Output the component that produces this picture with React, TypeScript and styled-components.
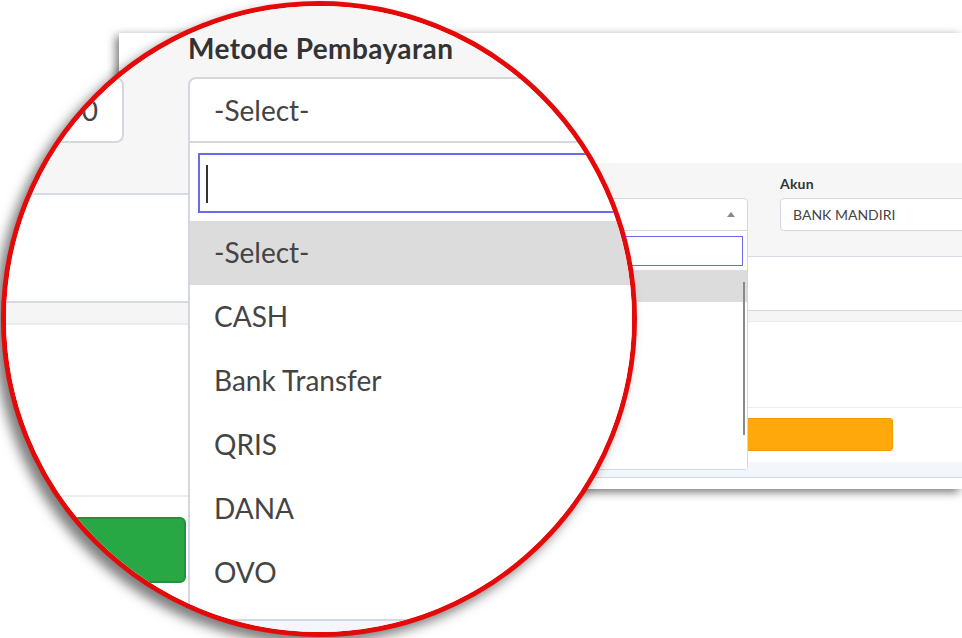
import React from 'react';
import styled, { createGlobalStyle } from 'styled-components';

const GlobalStyle = createGlobalStyle`
  html, body { margin: 0; padding: 0; background: #ffffff; }
  body { width: 962px; height: 638px; overflow: hidden; }
  * { box-sizing: border-box; }
`;

const FONT = `Lato, "Open Sans", "Noto Sans", sans-serif`;

const Page = styled.div`
  position: relative;
  width: 962px;
  height: 638px;
  padding: 33px 0 0 119px;
  background: #ffffff;
  font-family: ${FONT};
`;

const Shot = styled.div`
  position: relative;
  z-index: 0;
  width: 843px;
  height: 456px;
  box-shadow: -3px 3px 9px rgba(0, 0, 0, 0.55);
`;

const Screen = styled.div`
  width: 843px;
  height: 456px;
  overflow: hidden;
  background: #ffffff;
  display: flex;
  flex-direction: column;
  font-family: ${FONT};
  color: #444;
`;

const TopArea = styled.div`
  height: 130px;
  flex: none;
`;

const FilterBand = styled.div`
  position: relative;
  z-index: 3;
  flex: none;
  height: 94px;
  background: #f6f6f6;
  border-bottom: 1px solid #d8dbe3;
  padding: 12px 0 0 0;
  display: grid;
  grid-template-columns: 103px 494px 494px;
  column-gap: 32px;
  align-items: start;
`;

const Field = styled.div`
  display: flex;
  flex-direction: column;
  gap: 6px;
`;

const Label = styled.div`
  height: 17px;
  font-size: 14px;
  font-weight: 700;
  letter-spacing: 0.2px;
  line-height: 17px;
  color: #333;
  white-space: nowrap;
`;

const SelectWrap = styled.div`
  position: relative;
`;

const InputBox = styled.div<{ $align?: string; $open?: boolean }>`
  height: 33px;
  background: #fff;
  border: 1px solid #d3d7df;
  border-radius: ${(p) => (p.$open ? '4px 4px 0 0' : '4px')};
  padding: 0 12px;
  display: flex;
  align-items: center;
  justify-content: ${(p) => p.$align || 'flex-start'};
  font-size: 14px;
  color: #444;
  white-space: nowrap;
`;

const SelectValue = styled.span`
  flex: 1;
`;

const Arrow = styled.span`
  width: 0;
  height: 0;
  border-left: 4px solid transparent;
  border-right: 4px solid transparent;
  border-bottom: 5px solid #888;
`;

const Dropdown = styled.div`
  position: absolute;
  left: 0;
  right: 0;
  top: 100%;
  z-index: 10;
  background: #fff;
  border: 1px solid #d3d7df;
  border-top: none;
  border-radius: 0 0 4px 4px;
  padding-top: 5px;
`;

const SearchBox = styled.div`
  margin: 0 4px 4px 4px;
  height: 30px;
  border: 1px solid #6a6aec;
  display: flex;
  align-items: center;
  padding-left: 3px;
`;

const Caret = styled.span`
  width: 1px;
  height: 19px;
  background: #333;
`;

const OptionList = styled.div`
  position: relative;
  height: 199px;
  overflow: hidden;
`;

const Option = styled.div<{ $active?: boolean }>`
  height: 32px;
  line-height: 32px;
  padding: 0 12px;
  font-size: 14px;
  color: #444;
  background: ${(p) => (p.$active ? '#dcdcdc' : '#fff')};
  white-space: nowrap;
`;

const ScrollThumb = styled.div`
  position: absolute;
  right: 2px;
  top: 12px;
  width: 2px;
  height: 153px;
  background: #8a8a8a;
`;

const Spacer = styled.div<{ $h: number }>`
  flex: none;
  height: ${(p) => p.$h}px;
`;

const Strip = styled.div`
  flex: none;
  height: 12px;
  background: #f5f5f5;
  border-top: 1px solid #d7dae2;
  border-bottom: 1px solid #ececec;
`;

const Blank = styled.div<{ $h: number }>`
  flex: none;
  height: ${(p) => p.$h}px;
  border-bottom: 1px solid #ededed;
`;

const ButtonRow = styled.div`
  flex: none;
  height: 54px;
  padding: 10px 0 11px 0;
  display: flex;
  gap: 32px;
`;

const Button = styled.div<{ $tone: 'green' | 'orange'; $w: number }>`
  width: ${(p) => p.$w}px;
  height: 33px;
  border-radius: 3px;
  background: ${(p) => (p.$tone === 'green' ? '#28a745' : '#ffa80b')};
  border: 1px solid ${(p) => (p.$tone === 'green' ? '#23913c' : '#f19d00')};
  color: #fff;
  font-size: 14px;
  display: flex;
  align-items: center;
  justify-content: center;
`;

const FooterBand = styled.div`
  flex: none;
  height: 16px;
  background: #f3f7fb;
  border-bottom: 1px solid #d3d7df;
`;

const Lens = styled.div`
  position: absolute;
  z-index: 5;
  left: 1px;
  top: 1px;
  width: 636px;
  height: 636px;
  border: 5px solid #e50a0a;
  border-radius: 50%;
  overflow: hidden;
  background: #fff;
  box-shadow: -7px 7px 12px rgba(0, 0, 0, 0.5);
`;

const Magnified = styled.div`
  position: absolute;
  left: -88px;
  top: -259px;
  transform: scale(2);
  transform-origin: 0 0;
`;

const options = ['-Select-', 'CASH', 'Bank Transfer', 'QRIS', 'DANA', 'OVO', 'GOPAY', 'ShopeePay'];

function PaymentScreen() {
  return (
    <Screen>
      <TopArea />
      <FilterBand>
        <Field>
          <Label>Nominal</Label>
          <InputBox $align="flex-end">1.500.000</InputBox>
        </Field>
        <Field>
          <Label>Metode Pembayaran</Label>
          <SelectWrap>
            <InputBox $open>
              <SelectValue>-Select-</SelectValue>
              <Arrow />
            </InputBox>
            <Dropdown>
              <SearchBox>
                <Caret />
              </SearchBox>
              <OptionList>
                {options.map((o, i) => (
                  <Option key={o} $active={i === 0}>
                    {o}
                  </Option>
                ))}
                <ScrollThumb />
              </OptionList>
            </Dropdown>
          </SelectWrap>
        </Field>
        <Field>
          <Label>Akun</Label>
          <InputBox>BANK MANDIRI</InputBox>
        </Field>
      </FilterBand>
      <Spacer $h={53} />
      <Strip />
      <Blank $h={86} />
      <ButtonRow>
        <Button $tone="green" $w={134}>Simpan</Button>
        <Button $tone="orange" $w={608}>Batal</Button>
      </ButtonRow>
      <FooterBand />
    </Screen>
  );
}

export default function App() {
  return (
    <Page>
      <GlobalStyle />
      <Shot>
        <PaymentScreen />
      </Shot>
      <Lens>
        <Magnified>
          <PaymentScreen />
        </Magnified>
      </Lens>
    </Page>
  );
}
